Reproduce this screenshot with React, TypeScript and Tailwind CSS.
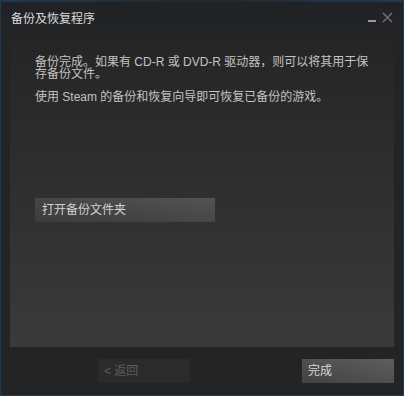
import React from "react";

const font = { fontFamily: '"Liberation Sans", "Noto Sans CJK SC", sans-serif' };

export default function App() {
  return (
    <div
      className="w-[404px] h-[396px] flex flex-col bg-[#242424] border border-t-0 border-[#1d3a55] text-[12px] leading-[12px]"
      style={font}
    >
      <div className="h-[2px] bg-gradient-to-r from-[#1d3a55] via-[#24262a] to-[#1d3a55]" />
      {/* title bar */}
      <div className="h-[34px] flex items-start bg-gradient-to-b from-[#202226] to-[#232425] pl-[10px] pr-[10px]">
        <div className="pt-[11px] text-[#dcdcdc] text-[12px]">备份及恢复程序</div>
        <div className="ml-auto flex items-start gap-[6px] pt-[9px]">
          <div className="w-[8px] h-[2px] bg-[#9a9a9a] mt-[9px]" />
          <svg width="11" height="11" viewBox="0 0 11 11" className="mt-[1px]">
            <path d="M1 1 L10 10 M10 1 L1 10" stroke="#6e6e6e" strokeWidth="1.6" />
          </svg>
        </div>
      </div>
      {/* content panel */}
      <div className="mx-[9px] h-[311px] bg-gradient-to-b from-[#252525] to-[#3a3a3a] flex flex-col pl-[25px] pr-[20px] pt-[20px]">
        <p className="text-[#c3c3c3] leading-[12px] w-[340px]">
          备份完成。如果有 CD-R 或 DVD-R 驱动器，则可以将其用于保存备份文件。
        </p>
        <p className="text-[#c3c3c3] mt-[11px]">使用 Steam 的备份和恢复向导即可恢复已备份的游戏。</p>
        <button className="mt-[95px] w-[180px] h-[24px] text-left pl-[7px] text-[#d2d2d2] bg-gradient-to-tr from-[#3b3b3b] to-[#535353]">
          打开备份文件夹
        </button>
      </div>
      {/* footer */}
      <div className="flex-1 flex items-start pt-[12px] pl-[97px] pr-[9px]">
        <button className="w-[92px] h-[24px] text-left pl-[6px] bg-[#2b2b2b] text-[#5e5e5e]">&lt; 返回</button>
        <button className="ml-auto w-[92px] h-[24px] text-left pl-[6px] text-[#d8d8d8] bg-gradient-to-tr from-[#424242] to-[#5e5e5e]">
          完成
        </button>
      </div>
    </div>
  );
}
